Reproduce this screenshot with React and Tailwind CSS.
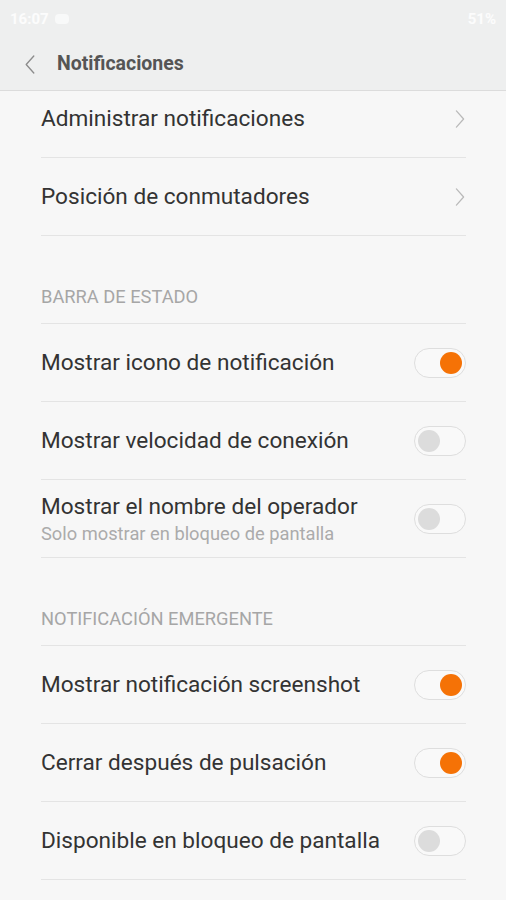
import { Fragment } from 'react'

const font = { fontFamily: 'Roboto, "Noto Sans", sans-serif' }

function Chevron({ left = false, className = '' }) {
  return (
    <svg viewBox="0 0 12 20" className={className} fill="none" stroke="currentColor" strokeWidth="1.4" strokeLinecap="round" strokeLinejoin="round">
      {left ? <path d="M10 1 L2 10 L10 19" /> : <path d="M2 1 L10 10 L2 19" />}
    </svg>
  )
}

function Toggle({ on }) {
  return (
    <div className="w-[52px] h-[30px] rounded-full border border-[#dedede] bg-[#f9f9f9] flex items-center px-[3px] shrink-0">
      <div className={`w-[22px] h-[22px] rounded-full ${on ? 'bg-[#f57206] ml-auto' : 'bg-[#dcdcdc]'}`} />
    </div>
  )
}

function Row({ title, subtitle, toggle, chevron, first = false }) {
  return (
    <div className={`${first ? 'h-[67px] pb-[10px]' : 'h-[78px]'} border-b border-[#e4e4e4] flex items-center justify-between`}>
      <div className="flex flex-col">
        <span className="text-[22.6px] text-[#333333] leading-[28px]">{title}</span>
        {subtitle && <span className="text-[18.3px] text-[#ababab] leading-[22px] mt-[2px]">{subtitle}</span>}
      </div>
      {chevron && <Chevron className="w-[12px] h-[18px] text-[#b9b9b9]" />}
      {toggle !== undefined && <Toggle on={toggle} />}
    </div>
  )
}

function Section({ label }) {
  return (
    <div className="h-[88px] border-b border-[#e4e4e4] flex items-end pb-[14px]">
      <span className="text-[18.3px] leading-[24px] text-[#a6a6a6] uppercase">{label}</span>
    </div>
  )
}

export default function App() {
  const barra = [
    { title: 'Mostrar icono de notificación', toggle: true },
    { title: 'Mostrar velocidad de conexión', toggle: false },
    { title: 'Mostrar el nombre del operador', subtitle: 'Solo mostrar en bloqueo de pantalla', toggle: false },
  ]
  const emergente = [
    { title: 'Mostrar notificación screenshot', toggle: true },
    { title: 'Cerrar después de pulsación', toggle: true },
    { title: 'Disponible en bloqueo de pantalla', toggle: false },
  ]

  return (
    <div className="w-[506px] h-[900px] overflow-hidden bg-[#f7f7f7]" style={font}>
      <div className="bg-[#eeefef] border-b border-[#dcdcdc]">
        {/* Status bar */}
        <div className="h-[38px] flex items-center justify-between px-[10px] text-white/80 text-[15px] font-bold">
          <div className="flex items-center gap-[6px]">
            <span>16:07</span>
            <span className="w-[14px] h-[10px] rounded-sm bg-white/60" />
          </div>
          <span>51%</span>
        </div>
        {/* Header */}
        <div className="h-[52px] flex items-center">
          <Chevron left className="w-[12px] h-[19px] text-[#8c8c8c] ml-[24px]" />
          <span className="ml-[21px] text-[19.5px] font-bold text-[#555555]">Notificaciones</span>
        </div>
      </div>

      <div className="ml-[41px] mr-[40px]">
        <Row title="Administrar notificaciones" chevron first />
        <Row title="Posición de conmutadores" chevron />

        <Section label="Barra de estado" />
        {barra.map(r => (
          <Fragment key={r.title}>
            <Row {...r} />
          </Fragment>
        ))}

        <Section label="Notificación emergente" />
        {emergente.map(r => (
          <Fragment key={r.title}>
            <Row {...r} />
          </Fragment>
        ))}
      </div>
    </div>
  )
}
